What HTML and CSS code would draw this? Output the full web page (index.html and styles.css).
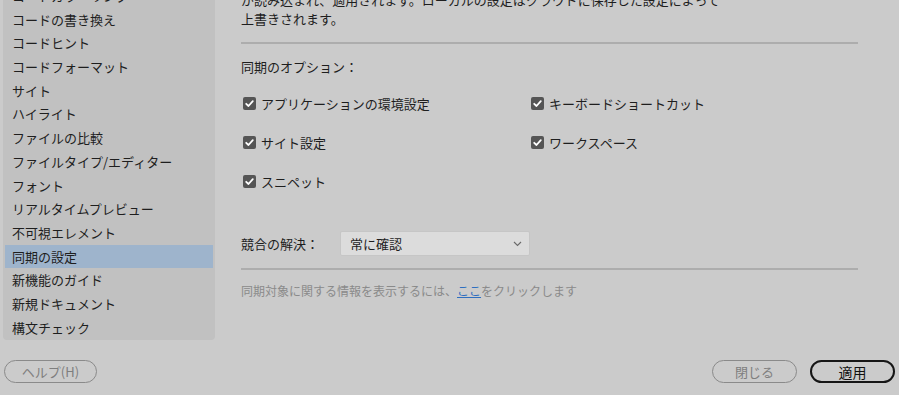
FILE: index.html
```html
<!DOCTYPE html>
<html lang="ja">
<head>
<meta charset="utf-8">
<link rel="stylesheet" href="styles.css">
</head>
<body>
<div class="dialog">
  <div class="main">
    <nav class="sidebar">
      <ul class="cats">
        <li>コードカラーリング</li>
        <li>コードの書き換え</li>
        <li>コードヒント</li>
        <li>コードフォーマット</li>
        <li>サイト</li>
        <li>ハイライト</li>
        <li>ファイルの比較</li>
        <li>ファイルタイプ/エディター</li>
        <li>フォント</li>
        <li>リアルタイムプレビュー</li>
        <li>不可視エレメント</li>
        <li class="selected">同期の設定</li>
        <li>新機能のガイド</li>
        <li>新規ドキュメント</li>
        <li>構文チェック</li>
      </ul>
    </nav>
    <section class="content">
      <p class="intro">が読み込まれ、適用されます。ローカルの設定はクラウドに保存した設定によって<br>上書きされます。</p>
      <hr class="rule">
      <div class="opt-title">同期のオプション：</div>
      <div class="opts">
        <label class="opt"><span class="cb"><svg viewBox="0 0 13 13" width="13" height="13"><path d="M3.2 6.8 L5.5 9 L9.8 4.2" fill="none" stroke="#fff" stroke-width="1.8" stroke-linecap="round" stroke-linejoin="round"/></svg></span>アプリケーションの環境設定</label>
        <label class="opt"><span class="cb"><svg viewBox="0 0 13 13" width="13" height="13"><path d="M3.2 6.8 L5.5 9 L9.8 4.2" fill="none" stroke="#fff" stroke-width="1.8" stroke-linecap="round" stroke-linejoin="round"/></svg></span>キーボードショートカット</label>
        <label class="opt"><span class="cb"><svg viewBox="0 0 13 13" width="13" height="13"><path d="M3.2 6.8 L5.5 9 L9.8 4.2" fill="none" stroke="#fff" stroke-width="1.8" stroke-linecap="round" stroke-linejoin="round"/></svg></span>サイト設定</label>
        <label class="opt"><span class="cb"><svg viewBox="0 0 13 13" width="13" height="13"><path d="M3.2 6.8 L5.5 9 L9.8 4.2" fill="none" stroke="#fff" stroke-width="1.8" stroke-linecap="round" stroke-linejoin="round"/></svg></span>ワークスペース</label>
        <label class="opt"><span class="cb"><svg viewBox="0 0 13 13" width="13" height="13"><path d="M3.2 6.8 L5.5 9 L9.8 4.2" fill="none" stroke="#fff" stroke-width="1.8" stroke-linecap="round" stroke-linejoin="round"/></svg></span>スニペット</label>
      </div>
      <div class="conflict">
        <span class="conflict-label">競合の解決：</span>
        <div class="select">
          <span>常に確認</span>
          <svg class="chev" viewBox="0 0 9 6" width="9" height="6"><path d="M1 1 L4.5 4.5 L8 1" fill="none" stroke="#6a6a6a" stroke-width="1.1"/></svg>
        </div>
      </div>
      <hr class="rule rule2">
      <p class="info">同期対象に関する情報を表示するには、<a class="link">ここ</a>をクリックします</p>
    </section>
  </div>
  <footer class="footer">
    <button class="btn help">ヘルプ(H)</button>
    <div class="actions">
      <button class="btn close">閉じる</button>
      <button class="btn apply">適用</button>
    </div>
  </footer>
</div>
</body>
</html>
```
FILE: styles.css
```css
html, body {
  margin: 0;
  padding: 0;
  background: #cbcbcb;
  overflow: hidden;
}
body {
  font-family: "Noto Sans CJK JP", "Noto Sans", sans-serif;
  font-size: 13px;
  color: #1e1e1e;
}
.dialog {
  width: 899px;
  height: 395px;
  display: flex;
  flex-direction: column;
}
.main {
  height: 340px;
  display: flex;
  overflow: hidden;
}
.sidebar {
  width: 212px;
  margin-left: 3px;
  background: #c1c1c1;
  border-radius: 0 0 4px 4px;
  overflow: hidden;
}
.cats {
  list-style: none;
  margin: -16px 0 0 0;
  padding: 0;
}
.cats li {
  height: 23.7px;
  line-height: 23.7px;
  padding-left: 7px;
  margin: 0 2px;
  white-space: nowrap;
}
.cats li.selected {
  background: #9eb4cc;
}
.content {
  margin-left: 26px;
  width: 617px;
  display: flex;
  flex-direction: column;
}
.intro {
  margin: -10px 0 0 0;
  line-height: 19px;
  white-space: nowrap;
}
.rule {
  border: 0;
  height: 2px;
  background: #adadad;
  margin: 14px 0 0 0;
}
.opt-title {
  margin-top: 14px;
  line-height: 18px;
}
.opts {
  margin-top: 18px;
  display: grid;
  grid-template-columns: 288px 1fr;
  grid-auto-rows: 39px;
}
.opt {
  display: flex;
  align-items: center;
  height: 18px;
  padding-left: 2px;
  gap: 5px;
}
.cb {
  width: 13px;
  height: 13px;
  background: #555555;
  border-radius: 2px;
  display: inline-flex;
}
.conflict {
  margin-top: 20px;
  display: flex;
  align-items: center;
  height: 25px;
}
.conflict-label {
  width: 99px;
}
.select {
  width: 190px;
  height: 25px;
  box-sizing: border-box;
  background: #dcdcdc;
  border: 1px solid #c6c6c6;
  border-radius: 2px;
  display: flex;
  align-items: center;
  justify-content: space-between;
  padding: 0 7px 0 9px;
}
.rule2 {
  margin-top: 12px;
}
.info {
  margin: 12px 0 0 0;
  font-size: 12px;
  color: #8a8a8a;
  line-height: 18px;
  white-space: nowrap;
}
.link {
  color: #2e6fc0;
  text-decoration: underline;
}
.footer {
  display: flex;
  justify-content: space-between;
  align-items: center;
  padding: 20px 4px 0 4px;
}
.actions {
  display: flex;
  gap: 13px;
}
.btn {
  font-family: inherit;
  font-size: 13px;
  height: 23px;
  box-sizing: border-box;
  border-radius: 12px;
  background: transparent;
  padding: 0;
  line-height: 20px;
}
.help {
  width: 93px;
  border: 1px solid #8a8a8a;
  color: #7e7e7e;
}
.close {
  width: 85px;
  border: 1px solid #8a8a8a;
  color: #7e7e7e;
}
.apply {
  width: 85px;
  border: 2px solid #161616;
  color: #111;
  font-size: 14px;
}
```
